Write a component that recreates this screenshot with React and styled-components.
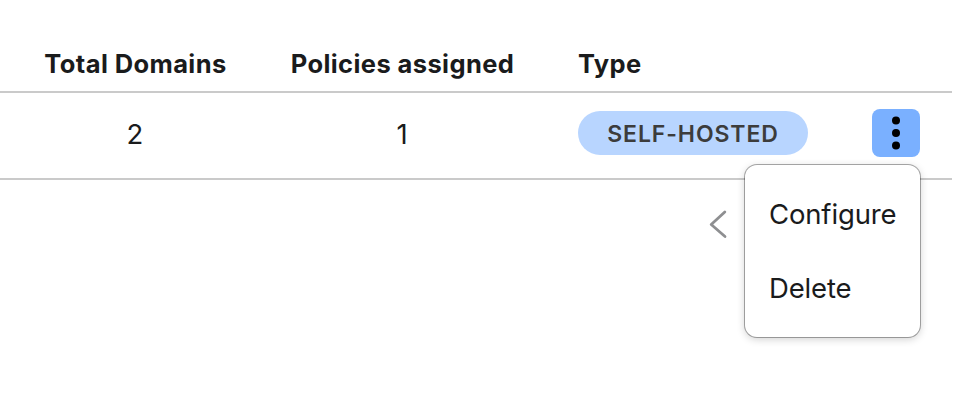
import React, { useState } from 'react';
import styled, { createGlobalStyle } from 'styled-components';

const GlobalStyle = createGlobalStyle`
  * {
    box-sizing: border-box;
  }

  body {
    margin: 0;
    background: #fff;
    color: #1a1b1c;
    font-family: Inter, 'Liberation Sans', sans-serif;
    overflow: hidden;
  }
`;

const Page = styled.main`
  width: 952px;
  height: 408px;
  padding-top: 36px;
`;

const Row = styled.div`
  display: grid;
  grid-template-columns: 270px 264px 294px 1fr;
  align-items: center;
  height: ${({ height }) => height};
  border-bottom: 2px solid #cacaca;
`;

const HeadCell = styled.div`
  padding-left: ${({ align }) => (align === 'left' ? '44px' : '1px')};
  text-align: ${({ align }) => align || 'center'};
  font-size: 25.5px;
  font-weight: 700;
  line-height: 32px;
  letter-spacing: 0.4px;
`;

const Cell = styled.div`
  display: flex;
  justify-content: ${({ align }) => (align === 'left' ? 'flex-start' : 'center')};
  padding-left: ${({ align }) => (align === 'left' ? '44px' : '0')};
  padding-bottom: ${({ align }) => (align === 'left' ? '5px' : '3px')};
  font-size: 27.5px;
  line-height: 34px;
`;

const TypeBadge = styled.span`
  display: flex;
  align-items: center;
  justify-content: center;
  width: 230px;
  height: 44px;
  padding-top: 1px;
  border-radius: 22px;
  background: #b8d5ff;
  color: #3c3c3c;
  font-size: 23px;
  font-weight: 600;
  letter-spacing: 0.9px;
`;

const Actions = styled.div`
  position: relative;
  width: 48px;
`;

const MenuButton = styled.button`
  display: flex;
  align-items: center;
  justify-content: center;
  width: 48px;
  height: 48px;
  padding: 0;
  border: none;
  border-radius: 8px;
  background: #7ab0ff;
  cursor: pointer;
`;

const Menu = styled.div`
  position: absolute;
  top: 56px;
  right: 0;
  display: flex;
  flex-direction: column;
  width: 175px;
  height: 172px;
  padding: 12px 0;
  border-radius: 12px;
  background: #fff;
  box-shadow: 0 0 0 1px rgba(0, 0, 0, 0.32), 0 2px 8px rgba(0, 0, 0, 0.2);
`;

const MenuItem = styled.button`
  flex: 1;
  padding: 0 24px;
  border: none;
  background: none;
  color: inherit;
  font: inherit;
  letter-spacing: -0.15px;
  text-align: left;
  cursor: pointer;
`;

const Pagination = styled.div`
  display: flex;
  justify-content: flex-end;
  padding: 28px 222px 0 0;
`;

const columns = [
  { label: 'Total Domains' },
  { label: 'Policies assigned' },
  { label: 'Type', align: 'left' },
];

function App() {
  const [isOpen, setIsOpen] = useState(true);

  return (
    <>
      <GlobalStyle />
      <Page>
        <Row height="57px">
          {columns.map(({ label, align }) => (
            <HeadCell key={label} align={align}>{label}</HeadCell>
          ))}
        </Row>
        <Row height="87px">
          <Cell>2</Cell>
          <Cell>1</Cell>
          <Cell align="left">
            <TypeBadge>SELF-HOSTED</TypeBadge>
          </Cell>
          <Cell align="left">
            <Actions>
              <MenuButton aria-label="Actions" onClick={() => setIsOpen(!isOpen)}>
                <svg width="8" height="34" viewBox="0 0 8 34">
                  <circle cx="4" cy="4.5" r="4" />
                  <circle cx="4" cy="17" r="4" />
                  <circle cx="4" cy="29.5" r="4" />
                </svg>
              </MenuButton>
              {isOpen && (
                <Menu>
                  <MenuItem>Configure</MenuItem>
                  <MenuItem>Delete</MenuItem>
                </Menu>
              )}
            </Actions>
          </Cell>
        </Row>
        <Pagination>
          <svg width="22" height="32" viewBox="0 0 22 32" fill="none" stroke="#8e8f91" strokeWidth="2.8">
            <path d="M16.8 4 L3.2 16.5 L17 28.5" strokeLinecap="round" strokeLinejoin="round" />
          </svg>
        </Pagination>
      </Page>
    </>
  );
}

export default App;
